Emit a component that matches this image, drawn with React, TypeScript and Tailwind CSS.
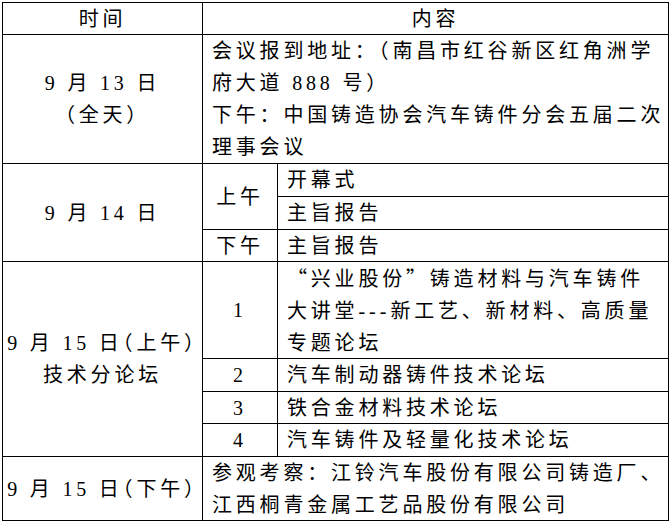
import React from 'react';

const cell = "bg-white flex items-center";
const center = `${cell} justify-center text-center`;
const left = `${cell} pl-[9px] whitespace-nowrap`;

function Paren({ children }: { children: React.ReactNode }) {
    return <span className="[font-feature-settings:'halt']">{children}</span>;
}

// digits in Times-like serif, as in the original document
function N({ children }: { children: React.ReactNode }) {
    return <span className="font-[family-name:Liberation_Serif,serif]">{children}</span>;
}

export default function App() {
    return (
        <div className="min-h-screen bg-white pt-[2px] pl-[2px] font-[family-name:Liberation_Serif,Noto_Sans_CJK_SC,serif] text-[20px] leading-[32px] tracking-[3.8px] text-black">
            <div className="grid w-fit grid-cols-[199px_74px_390px] grid-rows-[31px_128px_32px_32px_31px_96px_32px_31px_32px_63px] gap-px bg-black p-px">
                {/* header */}
                <div className={`${center} col-start-1 row-start-1`}>时间</div>
                <div className={`${center} col-start-2 col-span-2 row-start-1`}>内容</div>

                {/* 9/13 */}
                <div className={`${center} col-start-1 row-start-2`}>
                    <div>
                        <N>9</N> 月 <N>13</N> 日<br />（全天）
                    </div>
                </div>
                <div className={`${left} col-start-2 col-span-2 row-start-2`}>
                    <div>
                        会议报到地址：（南昌市红谷新区红角洲学<br />
                        府大道 <N>888</N> 号）<br />
                        下午：中国铸造协会汽车铸件分会五届二次<br />
                        理事会议
                    </div>
                </div>

                {/* 9/14 */}
                <div className={`${center} col-start-1 row-start-3 row-span-3`}>
                    <div><N>9</N> 月 <N>14</N> 日</div>
                </div>
                <div className={`${center} col-start-2 row-start-3 row-span-2`}>上午</div>
                <div className={`${left} col-start-3 row-start-3`}>开幕式</div>
                <div className={`${left} col-start-3 row-start-4`}>主旨报告</div>
                <div className={`${center} col-start-2 row-start-5`}>下午</div>
                <div className={`${left} col-start-3 row-start-5`}>主旨报告</div>

                {/* 9/15 morning */}
                <div className={`${center} col-start-1 row-start-6 row-span-4 whitespace-nowrap`}>
                    <div>
                        <N>9</N> 月 <N>15</N> 日<Paren>（</Paren>上午<Paren>）</Paren>
                        <br />
                        技术分论坛
                    </div>
                </div>
                <div className={`${center} col-start-2 row-start-6`}><N>1</N></div>
                <div className={`${left} col-start-3 row-start-6`}>
                    <div>
                        <span className="inline-block w-[23.8px] text-right tracking-normal pr-[4px] font-[family-name:Noto_Sans_CJK_SC,sans-serif]">“</span>兴业股份<span className="inline-block w-[23.8px] tracking-normal font-[family-name:Noto_Sans_CJK_SC,sans-serif]">”</span>铸造材料与汽车铸件
                        <br />
                        大讲堂<span className="tracking-[4px]">---</span>新工艺、新材料、高质量
                        <br />
                        专题论坛
                    </div>
                </div>
                <div className={`${center} col-start-2 row-start-7`}><N>2</N></div>
                <div className={`${left} col-start-3 row-start-7`}>汽车制动器铸件技术论坛</div>
                <div className={`${center} col-start-2 row-start-8`}><N>3</N></div>
                <div className={`${left} col-start-3 row-start-8`}>铁合金材料技术论坛</div>
                <div className={`${center} col-start-2 row-start-9`}><N>4</N></div>
                <div className={`${left} col-start-3 row-start-9`}>汽车铸件及轻量化技术论坛</div>

                {/* 9/15 afternoon */}
                <div className={`${center} col-start-1 row-start-10 whitespace-nowrap`}>
                    <div>
                        <N>9</N> 月 <N>15</N> 日<Paren>（</Paren>下午<Paren>）</Paren>
                    </div>
                </div>
                <div className={`${left} col-start-2 col-span-2 row-start-10`}>
                    <div>
                        参观考察：江铃汽车股份有限公司铸造厂、<br />
                        江西桐青金属工艺品股份有限公司
                    </div>
                </div>
            </div>
        </div>
    );
}
